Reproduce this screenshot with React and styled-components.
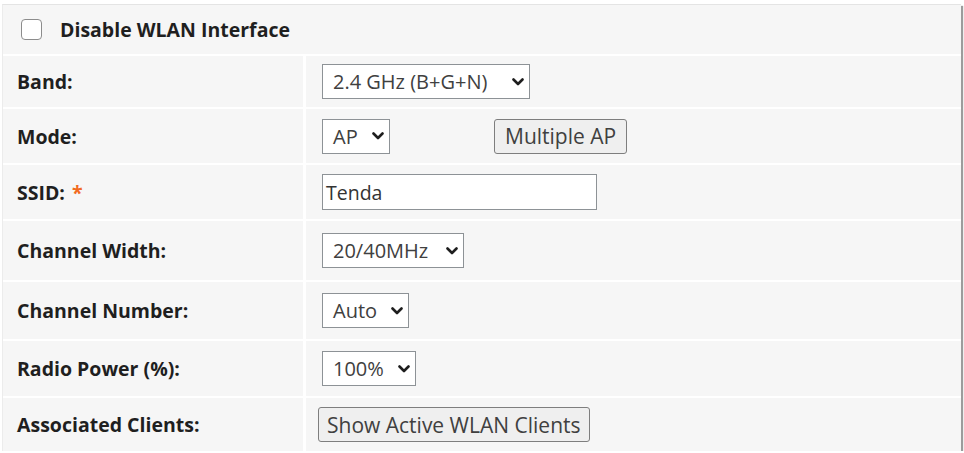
import React from "react";
import styled, { createGlobalStyle } from "styled-components";

const GlobalStyle = createGlobalStyle`
  body {
    margin: 0;
    background: #ffffff;
    font-family: "Open Sans", "Noto Sans", sans-serif;
  }
`;

const Panel = styled.div`
  margin: 4px 0 0 2px;
  width: 958px;
  background: #ffffff;
  border-top: 1px solid #e4e4e4;
  border-left: 1px solid #ececec;
  box-shadow: 2px 2px 1px #9c9c9c;
  display: flex;
  flex-direction: column;
  gap: 2px;
`;

const FullRow = styled.div`
  height: ${(p) => p.$h}px;
  background: #f6f6f6;
  display: flex;
  align-items: center;
  gap: 18px;
  padding-left: 18px;
`;

const Row = styled.div`
  height: ${(p) => p.$h}px;
  display: grid;
  grid-template-columns: 300px 1fr;
  column-gap: 3px;
`;

const LabelCell = styled.div`
  background: #f6f6f6;
  display: flex;
  align-items: center;
  padding-left: 14px;
  font-size: 19.5px;
  font-weight: 700;
  color: #1f1f1f;
`;

const ValueCell = styled.div`
  background: #f6f6f6;
  display: flex;
  align-items: center;
  padding-left: 16px;
  gap: ${(p) => p.$gap || 0}px;
`;

const Required = styled.span`
  color: #f26a21;
  margin-left: 7px;
`;

const CheckBox = styled.span`
  width: 21px;
  height: 21px;
  box-sizing: border-box;
  border: 1.5px solid #8c8c8c;
  border-radius: 4px;
  background: #ffffff;
`;

const CheckLabel = styled.span`
  font-size: 19.5px;
  font-weight: 700;
  color: #1f1f1f;
`;

const SelectBox = styled.div`
  width: ${(p) => p.$w}px;
  height: 35px;
  box-sizing: border-box;
  border: 1px solid #8d9296;
  background: #ffffff;
  display: flex;
  align-items: center;
  justify-content: space-between;
  padding: 0 5px 0 10px;
  font-size: 20px;
  color: #404040;
  white-space: nowrap;
`;

const TextInput = styled.div`
  width: 275px;
  height: 36px;
  box-sizing: border-box;
  border: 1px solid #8d9296;
  background: #ffffff;
  display: flex;
  align-items: center;
  padding-left: 3px;
  font-size: 19.5px;
  color: #333333;
`;

const Button = styled.div`
  height: 35px;
  box-sizing: border-box;
  border: 1px solid #7e7e7e;
  border-radius: 3px;
  background: #efefef;
  display: flex;
  align-items: center;
  margin-left: ${(p) => p.$shift || 0}px;
  padding: 0 ${(p) => p.$pad || 10}px;
  font-size: 21px;
  color: #404040;
  white-space: nowrap;
`;

const Chevron = () => (
  <svg width="12" height="8" viewBox="0 0 12 8">
    <path
      d="M1.5 1.5 L6 6 L10.5 1.5"
      fill="none"
      stroke="#1e1e1e"
      strokeWidth="2.6"
      strokeLinecap="round"
      strokeLinejoin="round"
    />
  </svg>
);

function Select({ value, width }) {
  return (
    <SelectBox $w={width}>
      <span>{value}</span>
      <Chevron />
    </SelectBox>
  );
}

export default function App() {
  return (
    <>
      <GlobalStyle />
      <Panel>
        <FullRow $h={49}>
          <CheckBox />
          <CheckLabel>Disable WLAN Interface</CheckLabel>
        </FullRow>
        <Row $h={51}>
          <LabelCell>Band:</LabelCell>
          <ValueCell>
            <Select value="2.4 GHz (B+G+N)" width={208} />
          </ValueCell>
        </Row>
        <Row $h={54}>
          <LabelCell>Mode:</LabelCell>
          <ValueCell $gap={104}>
            <Select value="AP" width={68} />
            <Button $pad={10}>Multiple AP</Button>
          </ValueCell>
        </Row>
        <Row $h={54}>
          <LabelCell>
            SSID:<Required>*</Required>
          </LabelCell>
          <ValueCell>
            <TextInput>Tenda</TextInput>
          </ValueCell>
        </Row>
        <Row $h={59}>
          <LabelCell>Channel Width:</LabelCell>
          <ValueCell>
            <Select value="20/40MHz" width={142} />
          </ValueCell>
        </Row>
        <Row $h={57}>
          <LabelCell>Channel Number:</LabelCell>
          <ValueCell>
            <Select value="Auto" width={87} />
          </ValueCell>
        </Row>
        <Row $h={55}>
          <LabelCell>Radio Power (%):</LabelCell>
          <ValueCell>
            <Select value="100%" width={94} />
          </ValueCell>
        </Row>
        <Row $h={53}>
          <LabelCell>Associated Clients:</LabelCell>
          <ValueCell>
            <Button $pad={8} $shift={-4}>Show Active WLAN Clients</Button>
          </ValueCell>
        </Row>
      </Panel>
    </>
  );
}
